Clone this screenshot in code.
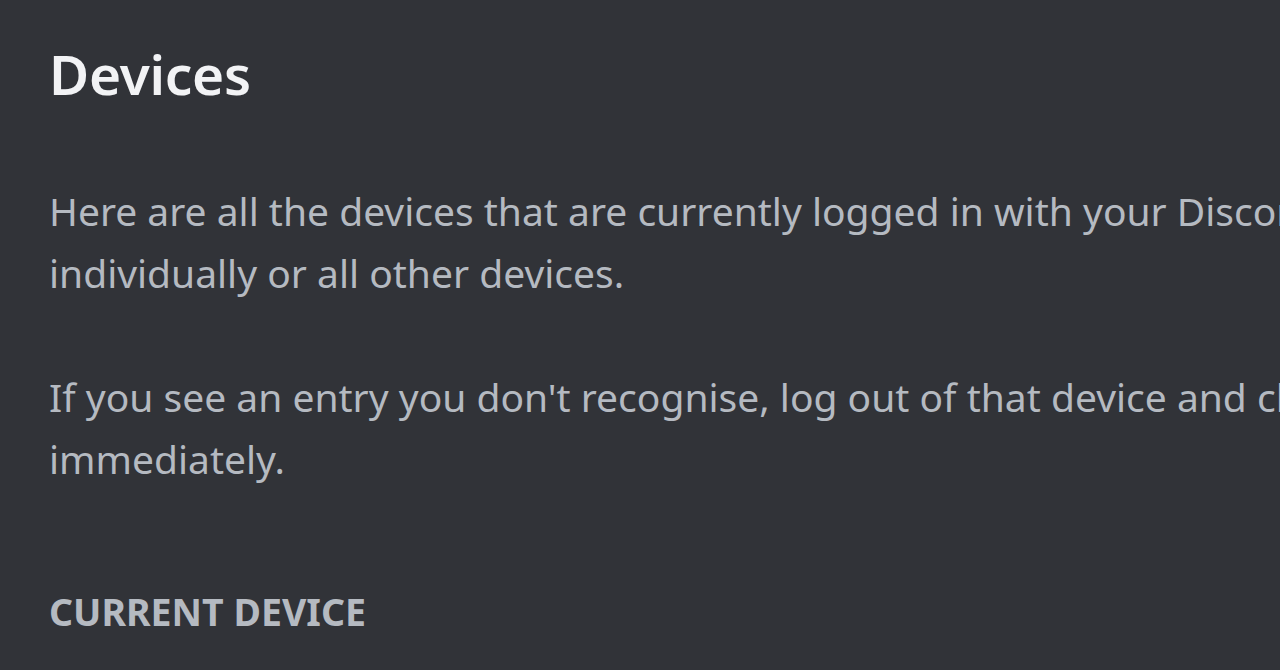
export default function App() {
  return (
    <div className="h-[670px] w-[1280px] overflow-hidden bg-[#313338] font-['Noto_Sans',sans-serif]">
      <div className="w-[1900px] pl-[49px] pt-[39px]">
        <h1 className="text-[55px] font-semibold leading-[70px] tracking-[-0.3px] text-[#f2f3f5]">
          Devices
        </h1>
        <div className="mt-[71px] text-[39px] leading-[62px] text-[#b5bac1]">
          <p className="whitespace-nowrap">
            Here are all the devices that are currently logged in with your Discord account. You can log out of each one
          </p>
          <p className="whitespace-nowrap">individually or all other devices.</p>
          <p className="mt-[62px] whitespace-nowrap">
            If you see an entry you don't recognise, log out of that device and change your Discord account password
          </p>
          <p className="whitespace-nowrap">immediately.</p>
        </div>
        <h2 className="mt-[100px] text-[37.5px] font-bold uppercase leading-[44px] text-[#b5bac1]">
          Current Device
        </h2>
      </div>
    </div>
  );
}
